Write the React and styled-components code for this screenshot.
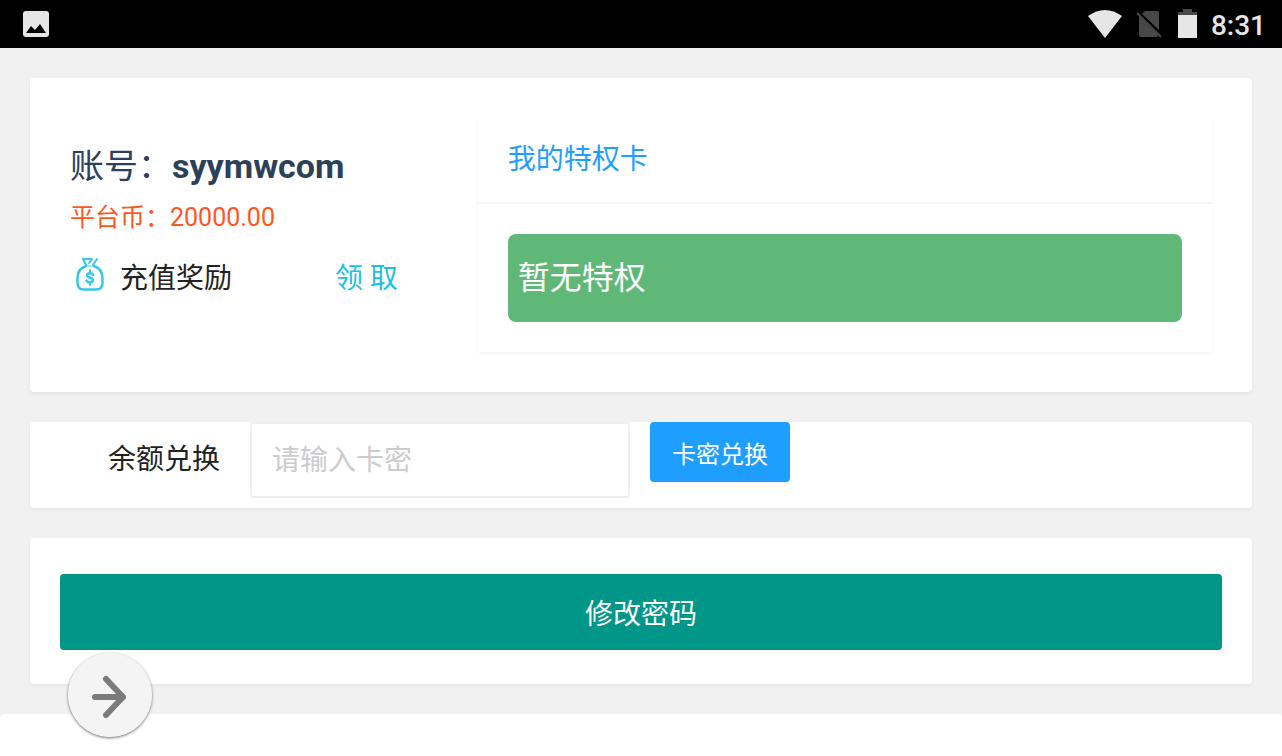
import { useState } from 'react';
import styled, { createGlobalStyle } from 'styled-components';

function App() {
	const [cardKey, setCardKey] = useState('');

	return (
		<Page>
			<GlobalStyle />
			<StatusBar />
			<Main>
				<AccountCard />
				<ExchangeCard onSubmit={(e) => e.preventDefault()}>
					<ExchangeLabel htmlFor="cardKey">余额兑换</ExchangeLabel>
					<ExchangeInput
						id="cardKey"
						type="text"
						placeholder="请输入卡密"
						value={cardKey}
						onChange={(e) => setCardKey(e.target.value)}
					/>
					<ExchangeButton type="submit">卡密兑换</ExchangeButton>
				</ExchangeCard>
				<PasswordCard>
					<PasswordButton type="button">修改密码</PasswordButton>
				</PasswordCard>
			</Main>
			<BottomPanel />
			<FloatingButton type="button" aria-label="前进">
				<svg width="44" height="44" viewBox="0 0 44 44" fill="none">
					<path
						d="M7 22H35M18 4L35 22L18 40"
						stroke="#7b7b7b"
						strokeWidth="6"
						strokeLinecap="round"
						strokeLinejoin="round"
					/>
				</svg>
			</FloatingButton>
		</Page>
	);
}

function StatusBar() {
	return (
		<Bar>
			<svg width="26" height="26" viewBox="0 0 26 26">
				<rect width="26" height="26" rx="3" fill="#e6e6e6" />
				<path d="M3 22L8 15L12 19L17 13L23 22Z" fill="#000000" />
			</svg>
			<BarRight>
				<svg width="34" height="28" viewBox="0 0 34 28">
					<path d="M0 6Q17 -6 34 6L17 28Z" fill="#e6e6e6" />
				</svg>
				<svg width="28" height="28" viewBox="0 0 28 28">
					<path d="M9 1H21Q23 1 23 3V20L6 4Z" fill="#484848" />
					<path d="M3 6L22 25Q22 27 20 27H5Q3 27 3 25Z" fill="#484848" />
					<path d="M1 3L25 27" stroke="#484848" strokeWidth="2" />
				</svg>
				<svg width="19" height="30" viewBox="0 0 19 30">
					<path d="M5 0H14V3H19V6H0V3H5Z" fill="#484848" />
					<path d="M0 6H19V29H0Z" fill="#e6e6e6" />
				</svg>
				<Clock>8:31</Clock>
			</BarRight>
		</Bar>
	);
}

function AccountCard() {
	return (
		<Account>
			<Profile>
				<UserName>
					账号：<strong>syymwcom</strong>
				</UserName>
				<Coins>平台币：20000.00</Coins>
				<Reward>
					<MoneyBag />
					<span>充值奖励</span>
					<ClaimLink href="#claim">领 取</ClaimLink>
				</Reward>
			</Profile>
			<Privilege>
				<PrivilegeTitle>我的特权卡</PrivilegeTitle>
				<PrivilegeBody>
					<PrivilegeStatus>暂无特权</PrivilegeStatus>
				</PrivilegeBody>
			</Privilege>
		</Account>
	);
}

function MoneyBag() {
	return (
		<svg width="40" height="40" viewBox="0 0 40 40" fill="none" stroke="#35c8ea" strokeLinecap="round">
			<path
				d="M16 10C10 12 7.500 16 7.500 22V27Q7.500 33.500 14 33.500H26Q32.500 33.500 32.500 27V22C32.500 16 30 12 24 10"
				strokeWidth="2.5"
			/>
			<path d="M16 10H24" strokeWidth="1.5" opacity="0.6" />
			<path d="M16 9L13 3H22L19 7M27 3L23 9" strokeWidth="2" strokeLinejoin="round" />
			<path
				d="M23 19C22.500 16.500 17 16.500 17 19.500C17 22.500 23 21 23 24C23 27 17 27 16.500 24.500"
				strokeWidth="2.5"
			/>
			<path d="M20 14V16M20 27V29" strokeWidth="2" />
		</svg>
	);
}

const GlobalStyle = createGlobalStyle`
	* {
		box-sizing: border-box;
		margin: 0;
		padding: 0;
	}

	body {
		background: #f1f1f1;
	}

	body, button, input {
		font-family: Roboto, "Noto Sans CJK SC", sans-serif;
		font-size: 28px;
	}
`;

const Page = styled.div`
	display: flex;
	flex-direction: column;
	min-height: 100vh;
	color: #222222;
`;

const Bar = styled.header`
	display: flex;
	align-items: center;
	justify-content: space-between;
	height: 48px;
	padding: 0 16px 0 23px;
	background: #000000;
`;

const BarRight = styled.div`
	display: flex;
	align-items: center;
	gap: 14px;
`;

const Clock = styled.time`
	padding-top: 3px;
	font-weight: 500;
	line-height: 32px;
	color: #e6e6e6;
`;

const Main = styled.main`
	display: flex;
	flex-direction: column;
	gap: 30px;
	padding: 30px;
`;

const Account = styled.section`
	display: grid;
	grid-template-columns: 5fr 9fr;
	padding: 40px;
	background: #ffffff;
	border-radius: 4px;
	box-shadow: 0 2px 4px rgba(0, 0, 0, 0.05);
`;

const Profile = styled.div`
	padding: 26px 80px 0 0;
`;

const UserName = styled.h1`
	font-size: 34px;
	font-weight: 400;
	line-height: 44px;
	color: #2c4159;
`;

const Coins = styled.p`
	margin-top: 12px;
	font-size: 25px;
	line-height: 36px;
	color: #ff5722;
`;

const Reward = styled.div`
	display: flex;
	align-items: center;
	gap: 10px;
	height: 40px;
	margin-top: 20px;
`;

const ClaimLink = styled.a`
	margin-left: auto;
	color: #1cc0e4;
	text-decoration: none;
`;

const Privilege = styled.section`
	border-radius: 4px;
	box-shadow: 0 2px 4px rgba(0, 0, 0, 0.05);
`;

const PrivilegeTitle = styled.h2`
	padding: 0 30px;
	border-bottom: 2px solid #f6f6f6;
	font-size: 28px;
	font-weight: 400;
	line-height: 84px;
	color: #1e9fff;
`;

const PrivilegeBody = styled.div`
	padding: 30px;
`;

const PrivilegeStatus = styled.p`
	padding: 0 10px;
	background: #5fb878;
	border-radius: 8px;
	font-size: 32px;
	line-height: 88px;
	color: #ffffff;
`;

const ExchangeCard = styled.form`
	display: flex;
	align-items: flex-start;
	padding-bottom: 10px;
	background: #ffffff;
	border-radius: 4px;
	box-shadow: 0 2px 4px rgba(0, 0, 0, 0.05);
`;

const ExchangeLabel = styled.label`
	width: 220px;
	padding-right: 30px;
	line-height: 76px;
	text-align: right;
`;

const ExchangeInput = styled.input`
	width: 380px;
	height: 76px;
	padding: 0 20px;
	background: #ffffff;
	border: 2px solid #eeeeee;
	border-radius: 4px;
	color: #222222;

	&::placeholder {
		color: #cccccc;
	}
`;

const ExchangeButton = styled.button`
	width: 140px;
	height: 60px;
	margin-left: 20px;
	background: #1e9fff;
	border: none;
	border-radius: 4px;
	font-size: 24px;
	color: #ffffff;
	cursor: pointer;
`;

const PasswordCard = styled.section`
	padding: 36px 30px 34px;
	background: #ffffff;
	border-radius: 4px;
	box-shadow: 0 2px 4px rgba(0, 0, 0, 0.05);
`;

const PasswordButton = styled.button`
	display: block;
	width: 100%;
	height: 76px;
	background: #009688;
	border: none;
	border-radius: 4px;
	color: #ffffff;
	cursor: pointer;
`;

const BottomPanel = styled.div`
	flex: 1;
	background: #ffffff;
	border-radius: 4px 4px 0 0;
`;

/* stays over the page while it scrolls */
const FloatingButton = styled.button`
	position: fixed;
	left: 68px;
	bottom: 19px;
	display: flex;
	align-items: center;
	justify-content: center;
	width: 84px;
	height: 84px;
	padding-top: 4px;
	background: rgba(244, 244, 244, 0.96);
	border: none;
	border-radius: 50%;
	box-shadow: 0 1px 3px rgba(0, 0, 0, 0.6);
	cursor: pointer;
`;

export default App;
